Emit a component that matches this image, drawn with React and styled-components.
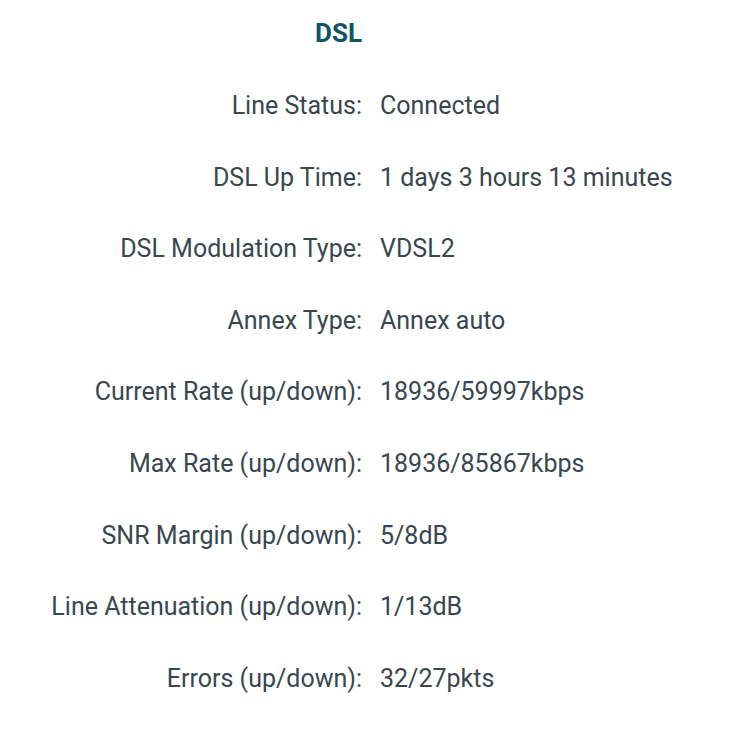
import React from 'react'
import styled, { createGlobalStyle } from 'styled-components'

const rows = [
  ['Line Status:', 'Connected'],
  ['DSL Up Time:', '1 days 3 hours 13 minutes'],
  ['DSL Modulation Type:', 'VDSL2'],
  ['Annex Type:', 'Annex auto'],
  ['Current Rate (up/down):', '18936/59997kbps'],
  ['Max Rate (up/down):', '18936/85867kbps'],
  ['SNR Margin (up/down):', '5/8dB'],
  ['Line Attenuation (up/down):', '1/13dB'],
  ['Errors (up/down):', '32/27pkts'],
]

export default function App() {
  return (
    <>
      <Global />
      <Panel>
        <Title>DSL</Title>
        <span />
        {rows.map(([label, value]) => (
          <React.Fragment key={label}>
            <Label>{label}</Label>
            <Value>{value}</Value>
          </React.Fragment>
        ))}
      </Panel>
    </>
  )
}

const Global = createGlobalStyle`
  body {
    margin: 0;
    background: #fff;
    font-family: Roboto, "Liberation Sans", sans-serif;
  }
`

const Panel = styled.div`
  display: grid;
  grid-template-columns: 362px 1fr;
  grid-auto-rows: 71.6px;
  grid-template-rows: 70.2px;
  column-gap: 18px;
  align-items: center;
  color: #37474f;
  font-size: 25px;
`

const Title = styled.h2`
  margin: 0;
  text-align: right;
  font-size: 26px;
  font-weight: 700;
  color: #0d5661;
  align-self: start;
  line-height: 28px;
  padding-top: 19px;
`

const Label = styled.div`
  text-align: right;
  line-height: 28px;
`

const Value = styled.div`
  line-height: 28px;
`
